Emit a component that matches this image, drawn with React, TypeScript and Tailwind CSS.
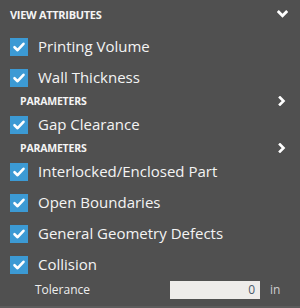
import React from "react";

function Check() {
  return (
    <div className="w-[18px] h-[18px] bg-[#3c9ad4] flex items-center justify-center shrink-0">
      <svg width="18" height="18" viewBox="0 0 18 18">
        <path d="M4.5 9.2 L7.6 12.2 L13.5 5.8" fill="none" stroke="#ffffff" strokeWidth="2.6" strokeLinecap="round" strokeLinejoin="round" />
      </svg>
    </div>
  );
}

function Row({ label }: { label: string }) {
  return (
    <div className="h-[31px] flex items-center pl-[10px]">
      <Check />
      <span className="ml-[10px] text-[15px] text-[#f4f4f4] leading-none">{label}</span>
    </div>
  );
}

function Params() {
  return (
    <div className="h-[16px] flex items-center justify-between pl-[20px] pr-[14px]">
      <span className="text-[10.5px] font-bold text-[#f4f4f4] leading-none tracking-[-0.2px]">PARAMETERS</span>
      <svg width="8" height="10" viewBox="0 0 8 10">
        <path d="M2 1.5 L5.5 5 L2 8.5" fill="none" stroke="#ffffff" strokeWidth="2.6" strokeLinecap="square" />
      </svg>
    </div>
  );
}

export default function App() {
  return (
    <div className="w-[300px] h-[308px] bg-[#505050] overflow-hidden flex flex-col" style={{ fontFamily: "'Open Sans', 'Noto Sans', sans-serif" }}>
      <div className="h-[31px] shrink-0 flex items-center justify-between pl-[10px] pr-[12px] pb-[2px]">
        <span className="text-[11px] font-bold text-[#f4f4f4] leading-none tracking-[-0.3px]">VIEW ATTRIBUTES</span>
        <svg width="11" height="9" viewBox="0 0 11 9">
          <path d="M1.8 2 L5.5 5.7 L9.2 2" fill="none" stroke="#ffffff" strokeWidth="2.8" strokeLinecap="square" />
        </svg>
      </div>
      <Row label="Printing Volume" />
      <Row label="Wall Thickness" />
      <Params />
      <Row label="Gap Clearance" />
      <Params />
      <Row label="Interlocked/Enclosed Part" />
      <Row label="Open Boundaries" />
      <Row label="General Geometry Defects" />
      <Row label="Collision" />
      <div className="h-[20px] flex items-center pl-[35px]">
        <span className="text-[12px] text-[#eeeeee] leading-none w-[135px]">Tolerance</span>
        <div className="w-[90px] h-[18px] bg-[#eeecea] flex items-center justify-end pr-[5px] text-[12px] text-[#4a5a6a] leading-none">0</div>
        <span className="ml-[10px] text-[12px] text-[#cfcfcf] leading-none">in</span>
      </div>
      <div className="flex-1" />
      <div className="h-[2px] bg-[#5c5c5c]" />
    </div>
  );
}
